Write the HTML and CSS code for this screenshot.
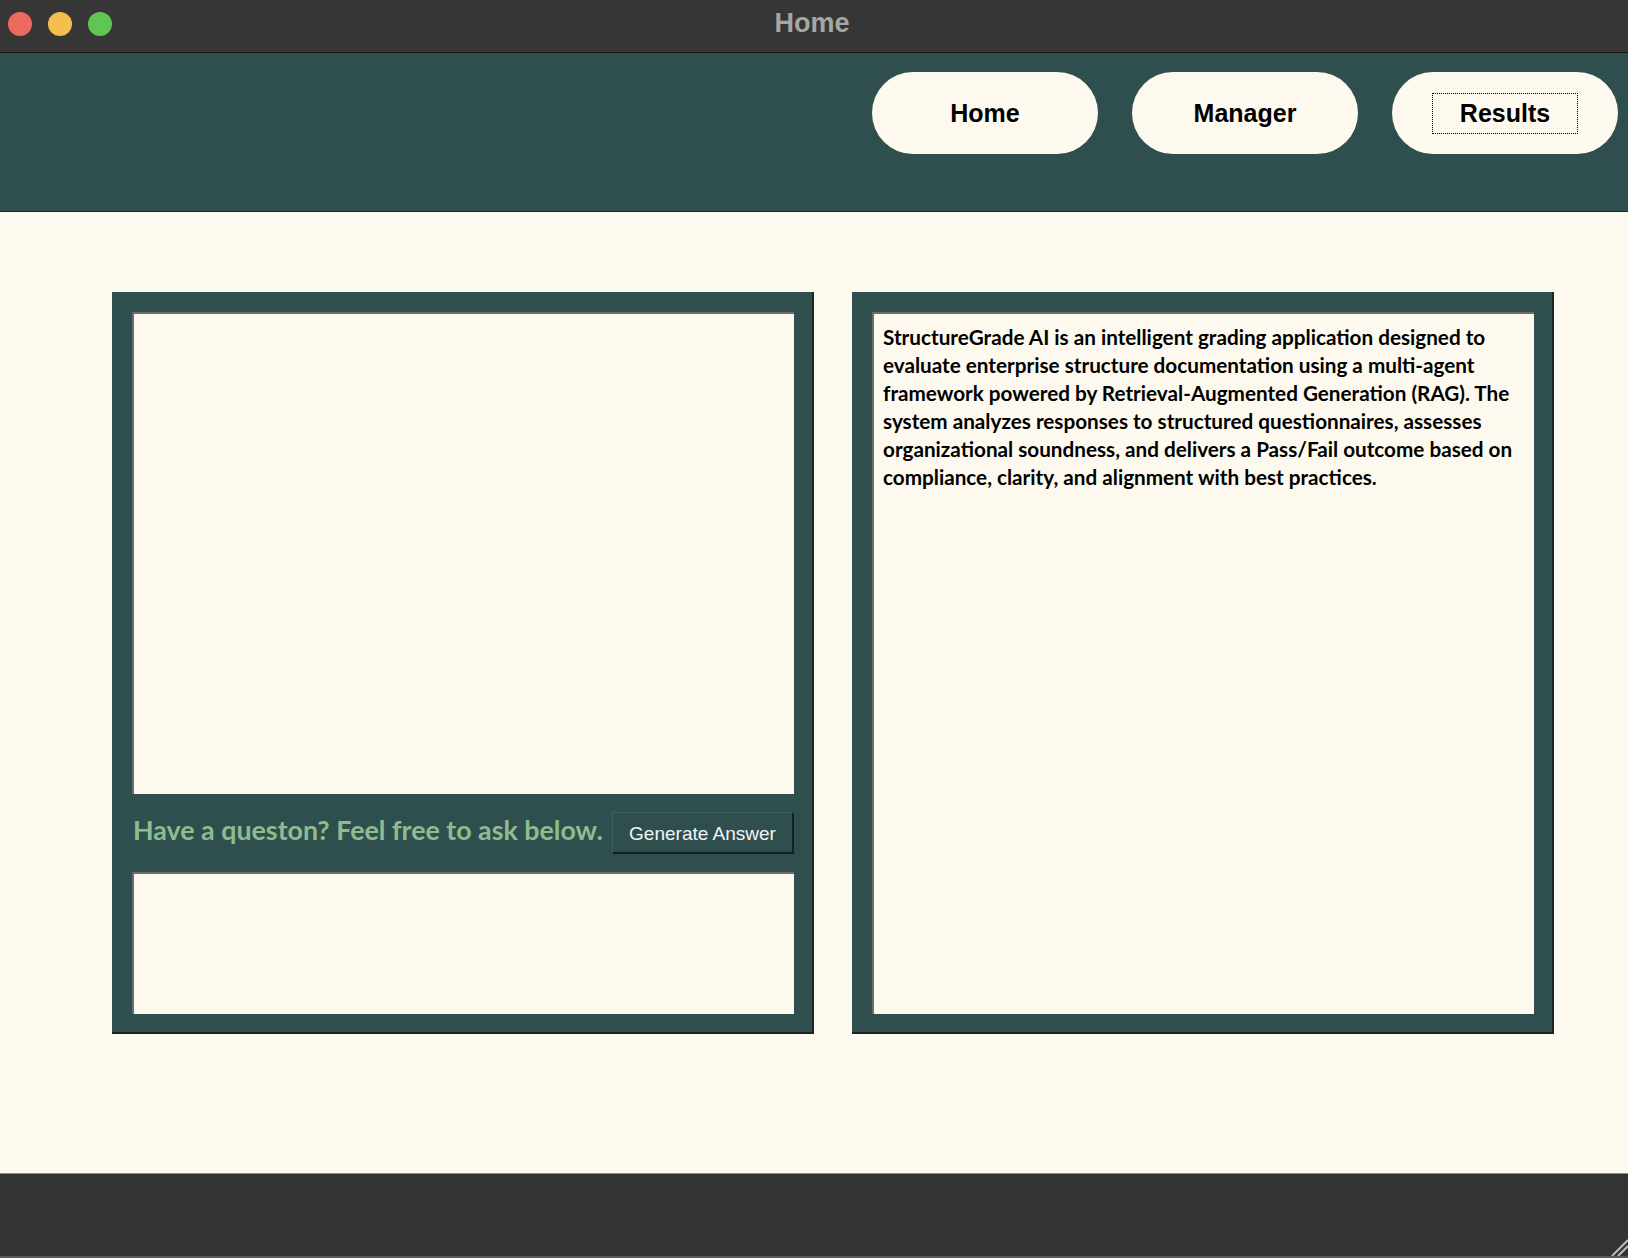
FILE: index.html
```html
<!DOCTYPE html>
<html lang="en">
<head>
<meta charset="utf-8">
<title>Home</title>
<link rel="stylesheet" href="styles.css">
</head>
<body>
<div class="window">
  <div class="titlebar">
    <div class="lights">
      <span class="light red"></span>
      <span class="light yellow"></span>
      <span class="light green"></span>
    </div>
    <div class="title">Home</div>
  </div>
  <header class="header">
    <nav class="nav">
      <button class="nav-btn"><span class="nav-label">Home</span></button>
      <button class="nav-btn"><span class="nav-label">Manager</span></button>
      <button class="nav-btn"><span class="nav-label focused">Results</span></button>
    </nav>
  </header>
  <main class="main">
    <section class="panel">
      <div class="box box-output"></div>
      <div class="ask-row">
        <span class="ask-label">Have a queston? Feel free to ask below.</span>
        <button class="gen-btn">Generate Answer</button>
      </div>
      <div class="box box-input"></div>
    </section>
    <section class="panel">
      <div class="box box-desc">StructureGrade AI is an intelligent grading application designed to<br>evaluate enterprise structure documentation using a multi-agent<br>framework powered by Retrieval-Augmented Generation (RAG). The<br>system analyzes responses to structured questionnaires, assesses<br>organizational soundness, and delivers a Pass/Fail outcome based on<br>compliance, clarity, and alignment with best practices.</div>
    </section>
  </main>
  <footer class="footer">
    <svg class="grip" width="22" height="22" viewBox="0 0 22 22">
      <line x1="6" y1="22" x2="22" y2="6" stroke="#bdbdbd" stroke-width="2"/>
      <line x1="12" y1="22" x2="22" y2="12" stroke="#bdbdbd" stroke-width="2"/>
    </svg>
  </footer>
</div>
</body>
</html>
```

FILE: styles.css
```css
* { box-sizing: border-box; }
html, body { margin: 0; padding: 0; }
body {
  width: 1628px;
  height: 1258px;
  overflow: hidden;
  background: #fdf9ee;
  font-family: "Liberation Sans", Arial, sans-serif;
}
.window {
  display: flex;
  flex-direction: column;
  height: 1258px;
  position: relative;
}
.titlebar {
  height: 53px;
  flex: none;
  background: #363636;
  border-bottom: 1px solid #141414;
  display: flex;
  align-items: center;
  position: relative;
}
.lights {
  display: flex;
  gap: 16px;
  padding-left: 8px;
  margin-top: -4px;
}
.light {
  width: 24px;
  height: 24px;
  border-radius: 50%;
  display: block;
}
.red { background: #ee6a5f; }
.yellow { background: #f5bf4f; }
.green { background: #61c554; }
.title {
  position: absolute;
  left: 0;
  right: 0;
  top: 8px;
  text-align: center;
  color: #a6a6a6;
  font-weight: 700;
  font-size: 27px;
  line-height: 30px;
  padding-right: 4px;
}
.header {
  height: 159px;
  flex: none;
  background: #2f4f4f;
  border-bottom: 1px solid #1a2626;
}
.nav {
  display: flex;
  justify-content: flex-end;
  gap: 34px;
  padding: 19px 10px 0 0;
}
.nav-btn {
  width: 226px;
  height: 82px;
  border: none;
  border-radius: 41px;
  background: #fdf9ee;
  display: flex;
  align-items: center;
  justify-content: center;
  font-family: "Liberation Sans", Arial, sans-serif;
  font-weight: 700;
  font-size: 25px;
  color: #000;
  padding: 0;
}
.nav-label {
  display: flex;
  align-items: center;
  justify-content: center;
  height: 41px;
  width: 146px;
  border: 1px solid transparent;
}
.nav-label.focused {
  border: 1px dotted #000;
}
.main {
  flex: 1;
  display: flex;
  align-items: flex-start;
  gap: 38px;
  padding: 80px 0 0 112px;
}
.panel {
  width: 702px;
  height: 742px;
  background: #2f4f4f;
  border-right: 2px solid #172424;
  border-bottom: 2px solid #172424;
  padding: 20px 18px 18px 20px;
  display: flex;
  flex-direction: column;
}
.box {
  background: #fdf9ee;
  border-top: 2px solid #6d6c68;
  border-left: 2px solid #6d6c68;
}
.box-output { height: 482px; flex: none; }
.box-input { height: 142px; flex: none; }
.box-desc {
  flex: 1;
  padding: 9px 8px 0 9px;
  font-family: Lato, "Liberation Sans", sans-serif;
  font-weight: 700;
  font-size: 20.7px;
  line-height: 28px;
  color: #000;
}
.ask-row {
  display: flex;
  align-items: center;
  justify-content: space-between;
  margin: 18px 0 19px;
  height: 41px;
}
.ask-label {
  font-family: Lato, "Liberation Sans", sans-serif;
  font-weight: 700;
  font-size: 26.8px;
  line-height: 30px;
  color: #8fbc8f;
  padding-left: 1px;
  margin-top: -5px;
}
.gen-btn {
  width: 182px;
  height: 42px;
  background: #2f4f4f;
  color: #f4f4f4;
  font-family: "Liberation Sans", Arial, sans-serif;
  font-size: 19px;
  border-top: 1px solid #3d6161;
  border-left: 1px solid #3d6161;
  border-right: 2px solid #162222;
  border-bottom: 2px solid #162222;
  padding: 3px 0 0 0;
}
.footer {
  height: 85px;
  flex: none;
  background: #333333;
  border-top: 1px solid #8d8b84;
  border-bottom: 2px solid #575757;
  position: relative;
}
.grip {
  position: absolute;
  right: 0;
  bottom: 0;
}
```
